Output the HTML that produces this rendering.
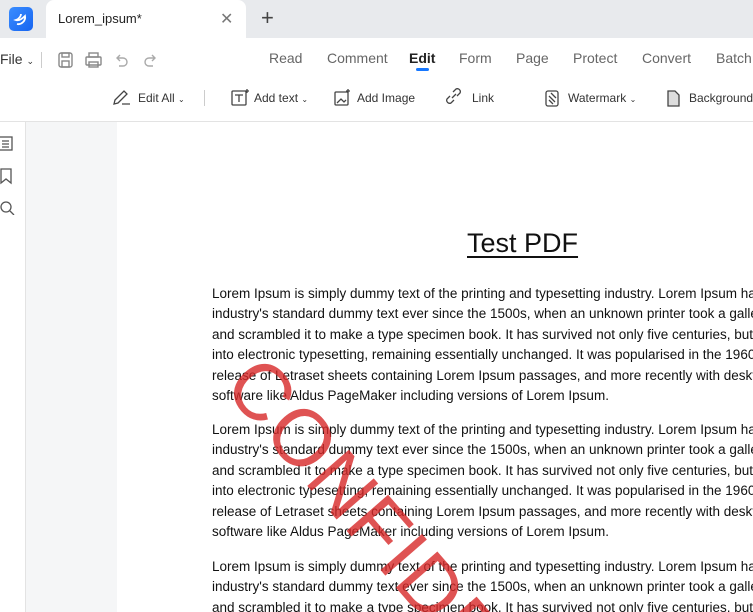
<!DOCTYPE html>
<html style="overflow:hidden;width:753px;height:612px"><head><meta charset="utf-8"><style>
*{margin:0;padding:0;box-sizing:border-box}
body{width:753px;height:612px;overflow:hidden;background:#fff;font-family:"Liberation Sans",sans-serif;position:relative;color:#333}
.tabbar{position:absolute;left:0;top:0;width:753px;height:38px;background:#e8eaed}
.logo{position:absolute;left:9px;top:7px;width:24px;height:24px;border-radius:5px;background:linear-gradient(135deg,#3a8dff,#1664f0)}
.tab{position:absolute;left:46px;top:0;width:200px;height:38px;background:#fff;border-radius:8px 8px 0 0}
.tab span{position:absolute;left:12px;top:11px;font-size:13px;color:#222}
.tab i{position:absolute;left:174px;top:9px;font-style:normal;font-size:16px;color:#777}
.plus{position:absolute;left:261px;top:5px;font-size:22px;color:#444}
.t{position:absolute;font-size:14px;color:#666;white-space:nowrap}
.s{position:absolute;font-size:12px;color:#333;white-space:nowrap}
.hl{position:absolute;left:0;top:121px;width:753px;height:1px;background:#e3e3e3}
.gray{position:absolute;left:25px;top:122px;width:92px;height:490px;background:#f5f6f7}
.side{position:absolute;left:25px;top:122px;width:1px;height:490px;background:#e3e3e3}
.page{position:absolute;left:117px;top:130px;width:636px;height:482px;background:#fff}
.p{position:absolute;left:212px;font-size:13.5px;line-height:20.4px;height:61.2px;color:#111;white-space:nowrap;width:541px;overflow:hidden}
.p.l{height:122.4px}
.clip{position:absolute;left:0;top:0;width:753px;height:612px;overflow:hidden}
</style></head><body><div class="clip">
<div class="tabbar"></div>
<div class="logo"><svg width="24" height="24"><path d="M8 17c4 1 9-3 8-8-3 3-6 5-9 4 3-1 5-4 5-6" stroke="#fff" stroke-width="1.8" fill="none"/></svg></div>
<div class="tab"><span>Lorem_ipsum*</span><i>✕</i></div>
<div class="plus">+</div>
<div class="t" style="left:0;top:51px;color:#333">File <small style="font-size:9px">⌄</small></div>
<div style="position:absolute;left:41px;top:52px;width:1px;height:16px;background:#ccc"></div>
<svg style="position:absolute;left:56px;top:51px" width="110" height="18" fill="none" stroke="#888" stroke-width="1.4"><rect x="3" y="2" width="13" height="14" rx="2"/><rect x="6" y="2" width="7" height="4"/><rect x="6" y="10" width="7" height="6"/><rect x="30" y="6" width="15" height="8" rx="1"/><rect x="33" y="2" width="9" height="4"/><rect x="33" y="11" width="9" height="5"/><path d="M64 4l-3 3 3 3M61 7h6a4 4 0 010 8h-4" stroke="#aaa"/><path d="M96 4l3 3-3 3M99 7h-6a4 4 0 000 8h4" stroke="#aaa"/></svg>
<div class="t" style="left:269px;top:50px">Read</div>
<div class="t" style="left:327px;top:50px">Comment</div>
<div class="t" style="left:409px;top:50px;color:#222;font-weight:bold">Edit</div>
<div style="position:absolute;left:416px;top:68px;width:13px;height:3px;border-radius:2px;background:#1677ff"></div>
<div class="t" style="left:459px;top:50px">Form</div>
<div class="t" style="left:516px;top:50px">Page</div>
<div class="t" style="left:573px;top:50px">Protect</div>
<div class="t" style="left:642px;top:50px">Convert</div>
<div class="t" style="left:716px;top:50px">Batch</div>
<svg style="position:absolute;left:112px;top:88px" width="640" height="20" fill="none" stroke="#444" stroke-width="1.3"><path d="M2 16l1-4 9-9 3 3-9 9z M10 16h8"/><rect x="120" y="3" width="14" height="14" rx="1"/><path d="M123 7h8M127 7v7"/><path d="M135 1v4M133 3h4"/><rect x="223" y="4" width="13" height="13" rx="1"/><path d="M225 15l4-4 3 3 2-2"/><path d="M236 1v4M234 3h4"/><path d="M342 12l-3 3a3 3 0 01-4-4l3-3M345 8l3-3a3 3 0 00-4-4l-3 3M340 10l4-4"/><rect x="434" y="3" width="12" height="15" rx="2"/><path d="M437 8l6 6M437 12l4 4M439 5l5 5"/><path d="M556 3h7l4 4v11h-11z" fill="#ddd"/></svg>
<div class="s" style="left:138px;top:91px">Edit All <small style="font-size:8px">⌄</small></div>
<div style="position:absolute;left:204px;top:90px;width:1px;height:16px;background:#ccc"></div>
<div class="s" style="left:254px;top:91px">Add text <small style="font-size:8px">⌄</small></div>
<div class="s" style="left:357px;top:91px">Add Image</div>
<div class="s" style="left:472px;top:91px">Link</div>
<div class="s" style="left:568px;top:91px">Watermark <small style="font-size:8px">⌄</small></div>
<div class="s" style="left:689px;top:91px">Background</div>
<div class="hl"></div>
<div class="gray"></div><div class="side"></div>
<svg style="position:absolute;left:0;top:135px" width="16" height="80" fill="none" stroke="#555" stroke-width="1.3"><rect x="-2" y="2" width="14" height="13"/><path d="M2 6h7M2 9h7M2 12h7"/><path d="M1 34h10v14l-5-4-5 4z"/><circle cx="6" cy="72" r="5"/><path d="M10 76l4 4"/></svg>
<div class="page"></div>
<div style="position:absolute;left:467px;top:228px;font-size:27px;color:#111;text-decoration:underline;text-decoration-thickness:2px;text-underline-offset:4px">Test PDF</div>
<div class="p l" style="top:284px">Lorem Ipsum is simply dummy text of the printing and typesetting industry. Lorem Ipsum has<br>industry's standard dummy text ever since the 1500s, when an unknown printer took a galley<br>and scrambled it to make a type specimen book. It has survived not only five centuries, but<br>into electronic typesetting, remaining essentially unchanged. It was popularised in the 1960s<br>release of Letraset sheets containing Lorem Ipsum passages, and more recently with desktop<br>software like Aldus PageMaker including versions of Lorem Ipsum.</div>
<div class="p l" style="top:420px">Lorem Ipsum is simply dummy text of the printing and typesetting industry. Lorem Ipsum has<br>industry's standard dummy text ever since the 1500s, when an unknown printer took a galley<br>and scrambled it to make a type specimen book. It has survived not only five centuries, but<br>into electronic typesetting, remaining essentially unchanged. It was popularised in the 1960s<br>release of Letraset sheets containing Lorem Ipsum passages, and more recently with desktop<br>software like Aldus PageMaker including versions of Lorem Ipsum.</div>
<div class="p" style="top:557px;height:55px">Lorem Ipsum is simply dummy text of the printing and typesetting industry. Lorem Ipsum has<br>industry's standard dummy text ever since the 1500s, when an unknown printer took a galley<br>and scrambled it to make a type specimen book. It has survived not only five centuries, but</div>
<svg style="position:absolute;left:0;top:0" width="753" height="612" viewBox="0 0 753 612"><text transform="translate(276 340) rotate(49)" x="0" y="72" font-family="Liberation Sans, sans-serif" font-size="80" letter-spacing="2" fill="rgba(215,40,40,0.8)">CONFIDENTIAL</text></svg>
</div></body></html>
